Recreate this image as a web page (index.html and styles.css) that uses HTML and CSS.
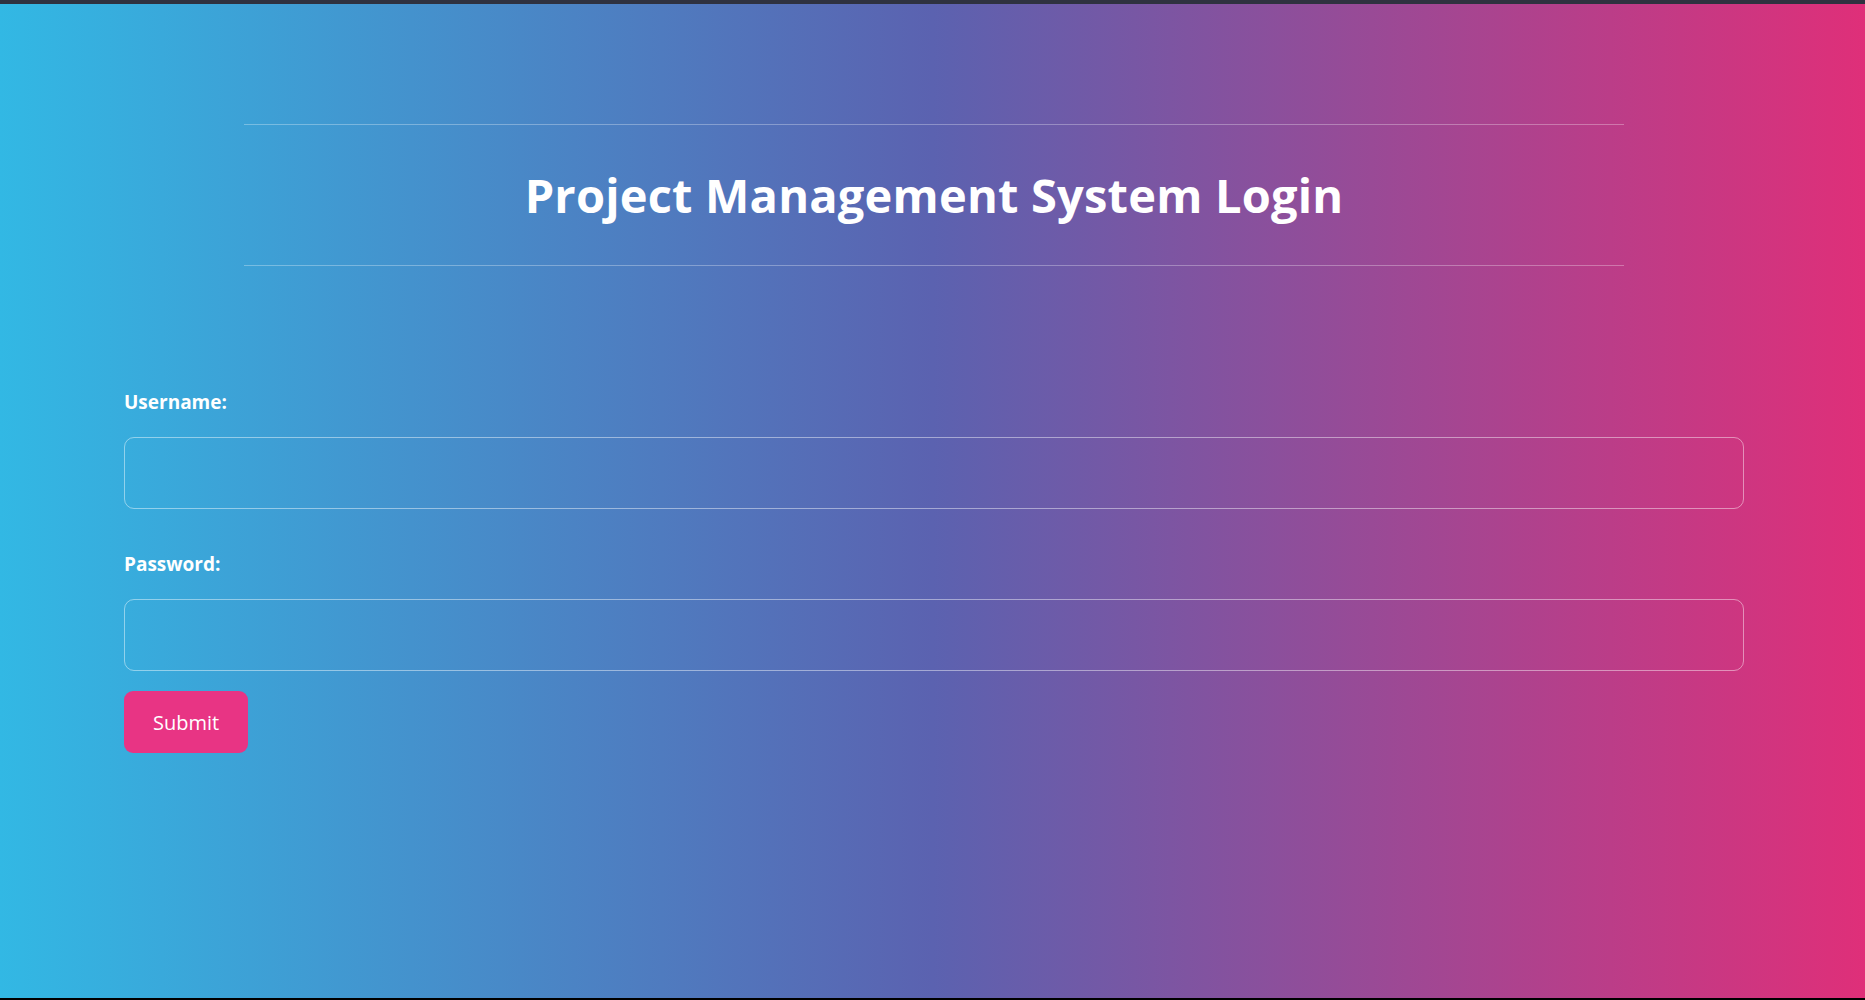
FILE: index.html
```html
<!DOCTYPE html>
<html lang="en">
<head>
<meta charset="utf-8">
<title>Project Management System Login</title>
<link rel="stylesheet" href="styles.css">
</head>
<body>
<div class="topbar"></div>
<main class="page">
  <header class="header">
    <h1 class="title">Project Management System Login</h1>
  </header>
  <form class="login-form">
    <label class="field-label" for="username">Username:</label>
    <input class="field-input" type="text" id="username" name="username">
    <label class="field-label" for="password">Password:</label>
    <input class="field-input" type="password" id="password" name="password">
    <button class="submit-btn" type="submit">Submit</button>
  </form>
</main>
<div class="bottombar"></div>
</body>
</html>
```

FILE: styles.css
```css
* { box-sizing: border-box; }

html, body {
  margin: 0;
  padding: 0;
  height: 1000px;
  overflow: hidden;
}

body {
  display: flex;
  flex-direction: column;
  font-family: "Open Sans", "Noto Sans", sans-serif;
  color: #fff;
  background: linear-gradient(to right, #32b8e4 0%, #5b62b0 50%, #df2f79 100%);
}

.topbar {
  height: 4px;
  background: #2f3240;
  flex: none;
}

.bottombar {
  height: 2px;
  background: #000;
  flex: none;
}

.page {
  flex: 1;
  padding: 120px 121px 0 124px;
}

.header {
  margin: 0 120px;
  height: 142px;
  border-top: 1px solid rgba(255, 255, 255, 0.3);
  border-bottom: 1px solid rgba(255, 255, 255, 0.3);
  display: flex;
  align-items: center;
  justify-content: center;
}

.title {
  margin: 0;
  font-size: 47px;
  line-height: 56px;
  font-weight: 700;
  letter-spacing: 0.2px;
  text-align: center;
}

.login-form {
  display: flex;
  flex-direction: column;
  align-items: flex-start;
  padding-top: 124px;
}

.field-label {
  display: block;
  font-size: 19px;
  line-height: 24px;
  font-weight: 700;
  margin-bottom: 23px;
}

.field-input {
  width: 100%;
  height: 72px;
  border: 1px solid rgba(255, 255, 255, 0.45);
  border-radius: 10px;
  background: transparent;
  color: #fff;
  font: 20px "Open Sans", sans-serif;
  padding: 0 16px;
  margin: 0 0 43px;
  outline: none;
}

.field-input[type="password"] {
  margin-bottom: 20px;
}

.submit-btn {
  height: 62px;
  padding: 0 29px;
  border: none;
  border-radius: 9px;
  background: #e83484;
  color: #fff;
  font: 400 20px "Open Sans", sans-serif;
  cursor: pointer;
}
```
